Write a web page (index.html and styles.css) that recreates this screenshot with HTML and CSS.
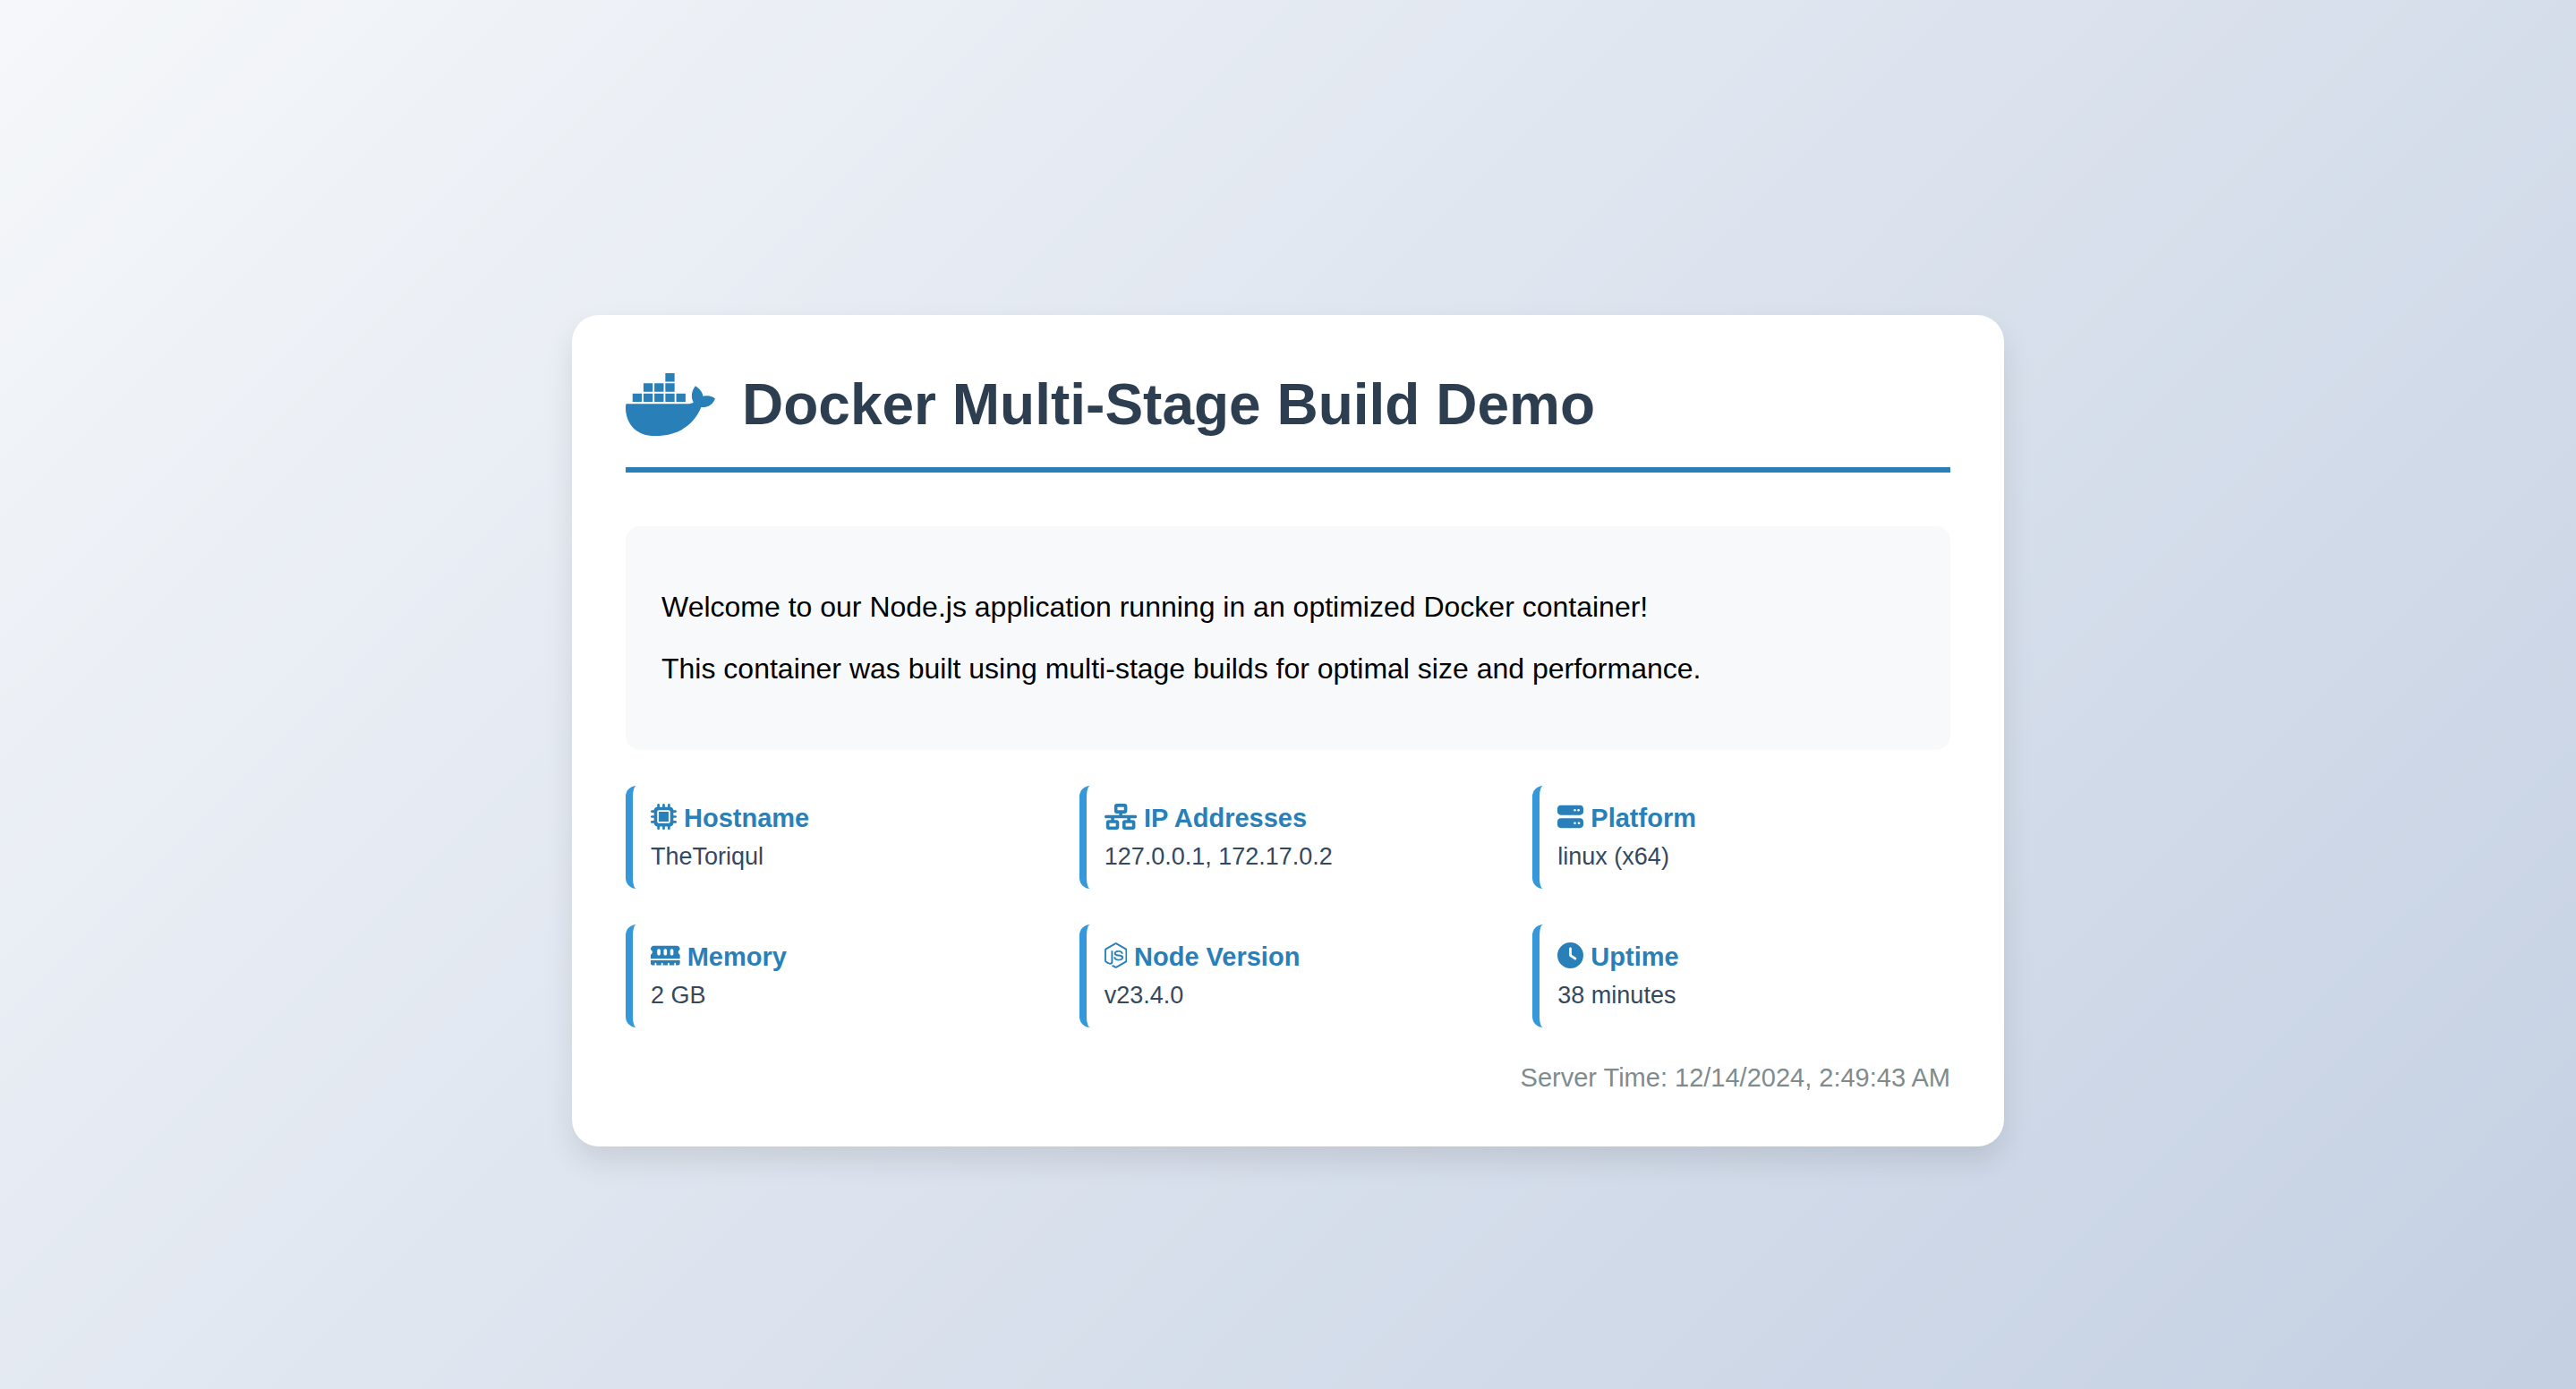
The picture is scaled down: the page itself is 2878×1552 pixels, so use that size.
FILE: index.html
```html
<!DOCTYPE html>
<html lang="en">
<head>
<meta charset="utf-8">
<meta name="viewport" content="width=device-width, initial-scale=1">
<title>Docker Multi-Stage Build Demo</title>
<link rel="stylesheet" href="styles.css">
</head>
<body>
<main class="container">
  <header class="header">
    <svg class="docker-icon" viewBox="0 0 640 512" aria-hidden="true"><path d="M349.9 236.3h-66.1v-59.4h66.1v59.4zm0-204.3h-66.1v60.7h66.1V32zm78.2 144.8H362v59.4h66.1v-59.4zm-156.3-72.1h-66.1v60.1h66.1v-60.1zm78.1 0h-66.1v60.1h66.1v-60.1zm276.8 100c-14.4-9.7-47.6-13.2-73.1-8.4-3.3-24-16.7-44.9-41.1-63.7l-14-9.3-9.3 14c-18.4 27.8-23.4 73.6-3.7 103.8-8.7 4.7-25.8 11.1-48.4 10.7H2.4c-8.7 50.8 5.8 116.8 44 162.1 37.1 43.9 92.7 66.2 165.4 66.2 157.4 0 273.9-72.5 328.4-204.2 21.4.4 67.6.1 91.3-45.2 1.5-2.5 6.6-13.2 8.5-17.1l-13.3-8.9zm-511.1-27.9h-66v59.4h66.1v-59.4zm78.1 0h-66.1v59.4h66.1v-59.4zm78.1 0h-66.1v59.4h66.1v-59.4zm-78.1-72.1h-66.1v60.1h66.1v-60.1z"/></svg>
    <h1 class="title">Docker Multi-Stage Build Demo</h1>
  </header>

  <section class="welcome">
    <p>Welcome to our Node.js application running in an optimized Docker container!</p>
    <p>This container was built using multi-stage builds for optimal size and performance.</p>
  </section>

  <section class="info-grid">
    <article class="info-item">
      <h2 class="info-label"><svg class="icon" viewBox="0 0 512 512" aria-hidden="true"><path d="M176 24c0-13.3-10.7-24-24-24s-24 10.7-24 24V64c-35.3 0-64 28.7-64 64H24c-13.3 0-24 10.7-24 24s10.7 24 24 24H64v56H24c-13.3 0-24 10.7-24 24s10.7 24 24 24H64v56H24c-13.3 0-24 10.7-24 24s10.7 24 24 24H64c0 35.3 28.7 64 64 64v40c0 13.3 10.7 24 24 24s24-10.7 24-24V448h56v40c0 13.3 10.7 24 24 24s24-10.7 24-24V448h56v40c0 13.3 10.7 24 24 24s24-10.7 24-24V448c35.3 0 64-28.7 64-64h40c13.3 0 24-10.7 24-24s-10.7-24-24-24H448V280h40c13.3 0 24-10.7 24-24s-10.7-24-24-24H448V176h40c13.3 0 24-10.7 24-24s-10.7-24-24-24H448c0-35.3-28.7-64-64-64V24c0-13.3-10.7-24-24-24s-24 10.7-24 24V64H280V24c0-13.3-10.7-24-24-24s-24 10.7-24 24V64H176V24zM160 128H352c17.7 0 32 14.3 32 32V352c0 17.7-14.3 32-32 32H160c-17.7 0-32-14.3-32-32V160c0-17.7 14.3-32 32-32zm192 32H160V352H352V160z"/></svg>Hostname</h2>
      <p class="info-value">TheToriqul</p>
    </article>
    <article class="info-item">
      <h2 class="info-label"><svg class="icon" viewBox="0 0 640 512" aria-hidden="true"><path d="M256 64H384v64H256V64zM240 0c-26.5 0-48 21.5-48 48v96c0 26.5 21.5 48 48 48h48v32H32c-17.7 0-32 14.3-32 32s14.3 32 32 32h96v32H80c-26.5 0-48 21.5-48 48v96c0 26.5 21.5 48 48 48H240c26.5 0 48-21.5 48-48V368c0-26.5-21.5-48-48-48H192V288H448v32H400c-26.5 0-48 21.5-48 48v96c0 26.5 21.5 48 48 48H560c26.5 0 48-21.5 48-48V368c0-26.5-21.5-48-48-48H512V288h96c17.7 0 32-14.3 32-32s-14.3-32-32-32H352V192h48c26.5 0 48-21.5 48-48V48c0-26.5-21.5-48-48-48H240zM96 448V384H224v64H96zm320-64H544v64H416V384z"/></svg>IP Addresses</h2>
      <p class="info-value">127.0.0.1, 172.17.0.2</p>
    </article>
    <article class="info-item">
      <h2 class="info-label"><svg class="icon" viewBox="0 0 512 512" aria-hidden="true"><path d="M64 32C28.7 32 0 60.7 0 96v64c0 35.3 28.7 64 64 64H448c35.3 0 64-28.7 64-64V96c0-35.3-28.7-64-64-64H64zm280 72a24 24 0 1 1 0 48 24 24 0 1 1 0-48zm48 24a24 24 0 1 1 48 0 24 24 0 1 1 -48 0zM64 288c-35.3 0-64 28.7-64 64v64c0 35.3 28.7 64 64 64H448c35.3 0 64-28.7 64-64V352c0-35.3-28.7-64-64-64H64zm280 72a24 24 0 1 1 0 48 24 24 0 1 1 0-48zm56 24a24 24 0 1 1 48 0 24 24 0 1 1 -48 0z"/></svg>Platform</h2>
      <p class="info-value">linux (x64)</p>
    </article>
    <article class="info-item">
      <h2 class="info-label"><svg class="icon" viewBox="0 0 576 512" aria-hidden="true"><path d="M64 64C28.7 64 0 92.7 0 128v7.4c0 6.8 4.4 12.6 10.1 16.3C23.3 160.3 32 175.1 32 192s-8.7 31.7-21.9 40.3C4.4 236 0 241.8 0 248.6V320H576V248.6c0-6.8-4.4-12.6-10.1-16.3C552.7 223.7 544 208.9 544 192s8.7-31.7 21.9-40.3c5.7-3.7 10.1-9.5 10.1-16.3V128c0-35.3-28.7-64-64-64H64zM576 352H0v64c0 17.7 14.3 32 32 32H80V416c0-8.8 7.2-16 16-16s16 7.2 16 16v32h96V416c0-8.8 7.2-16 16-16s16 7.2 16 16v32h96V416c0-8.8 7.2-16 16-16s16 7.2 16 16v32h96V416c0-8.8 7.2-16 16-16s16 7.2 16 16v32h48c17.7 0 32-14.3 32-32V352zM192 160v64c0 17.7-14.3 32-32 32s-32-14.3-32-32V160c0-17.7 14.3-32 32-32s32 14.3 32 32zm128 0v64c0 17.7-14.3 32-32 32s-32-14.3-32-32V160c0-17.7 14.3-32 32-32s32 14.3 32 32zm128 0v64c0 17.7-14.3 32-32 32s-32-14.3-32-32V160c0-17.7 14.3-32 32-32s32 14.3 32 32z"/></svg>Memory</h2>
      <p class="info-value">2 GB</p>
    </article>
    <article class="info-item">
      <h2 class="info-label"><svg class="icon" viewBox="0 0 448 512" aria-hidden="true"><path d="M224 508c-6.7 0-13.5-1.8-19.4-5.2l-61.7-36.5c-9.2-5.2-4.7-7-1.7-8 12.3-4.3 14.8-5.2 27.9-12.7 1.4-.8 3.2-.5 4.6.4l47.4 28.1c1.7 1 4.1 1 5.7 0l184.7-106.6c1.7-1 2.8-3 2.8-5V149.3c0-2.1-1.1-4-2.9-5.1L226.8 37.7c-1.7-1-4-1-5.7 0L36.6 144.3c-1.8 1-2.9 3-2.9 5.1v213.1c0 2 1.1 4 2.9 4.9l50.6 29.2c27.5 13.7 44.3-2.4 44.3-18.7V167.5c0-3 2.4-5.3 5.4-5.3h23.4c2.9 0 5.4 2.3 5.4 5.3V378c0 36.6-20 57.6-54.7 57.6-10.7 0-19.1 0-42.5-11.6l-48.4-27.9C8.1 389.2.7 376.3.7 362.4V149.3c0-13.8 7.4-26.8 19.4-33.7L204.6 9c11.7-6.6 27.2-6.6 38.8 0l184.7 106.7c12 6.9 19.4 19.8 19.4 33.7v213.1c0 13.8-7.4 26.7-19.4 33.7L243.4 502.8c-5.9 3.4-12.6 5.2-19.4 5.2zm149.1-210.1c0-39.9-27-50.5-83.7-58-57.4-7.6-63.2-11.5-63.2-24.9 0-11.1 4.9-25.9 47.4-25.9 37.9 0 51.9 8.2 57.7 33.8.5 2.4 2.7 4.2 5.2 4.2h24c1.5 0 2.9-.6 3.9-1.7s1.5-2.6 1.4-4.1c-3.7-44.1-33-64.6-92.2-64.6-52.7 0-84.1 22.2-84.1 59.5 0 40.4 31.3 51.6 81.8 56.6 60.5 5.9 65.2 14.8 65.2 26.7 0 20.6-16.6 29.4-55.5 29.4-48.9 0-59.6-12.3-63.2-36.6-.4-2.6-2.6-4.5-5.3-4.5h-23.9c-3 0-5.3 2.4-5.3 5.3 0 31.1 16.9 68.2 97.8 68.2 58.4-.1 92-23.2 92-63.4z"/></svg>Node Version</h2>
      <p class="info-value">v23.4.0</p>
    </article>
    <article class="info-item">
      <h2 class="info-label"><svg class="icon" viewBox="0 0 512 512" aria-hidden="true"><path d="M256 0a256 256 0 1 1 0 512A256 256 0 1 1 256 0zM232 120V256c0 8 4 15.5 10.7 20l96 64c11 7.4 25.9 4.4 33.3-6.7s4.4-25.9-6.7-33.3L280 243.2V120c0-13.3-10.7-24-24-24s-24 10.7-24 24z"/></svg>Uptime</h2>
      <p class="info-value">38 minutes</p>
    </article>
  </section>

  <footer class="timestamp">Server Time: 12/14/2024, 2:49:43 AM</footer>
</main>
</body>
</html>
```
FILE: styles.css
```css
* {
  box-sizing: border-box;
}

body {
  display: flex;
  justify-content: center;
  align-items: center;
  min-height: 100vh;
  margin: 0;
  padding: 120px 40px 40px;
  background: linear-gradient(135deg, #f5f7fa 0%, #c3cfe2 100%) 0 0 / 100% calc(100vh + 80px);
  font-family: "Liberation Sans", Arial, sans-serif;
}

.container {
  width: 100%;
  max-width: 1600px;
  padding: 60px;
  border-radius: 30px;
  background: #fff;
  box-shadow: 0 16px 32px rgba(0, 0, 0, 0.1);
}

.header {
  display: flex;
  align-items: center;
  gap: 30px;
  margin-bottom: 60px;
  padding-bottom: 30px;
  border-bottom: 6px solid #2980b9;
}

.docker-icon {
  height: 80px;
  fill: #2980b9;
}

.title {
  margin: 0;
  color: #2c3e50;
  font-size: 64px;
  line-height: 74px;
}

.welcome {
  margin-bottom: 40px;
  padding: 40px;
  border-radius: 16px;
  background: #f8f9fa;
  color: #000;
  font-size: 32px;
  line-height: 37px;
}

.welcome p {
  margin: 32px 0;
}

.info-grid {
  display: grid;
  grid-template-columns: repeat(3, 1fr);
  gap: 40px;
}

.info-item {
  padding: 20px;
  border-left: 8px solid #3498db;
  border-radius: 12px;
}

.info-label {
  display: flex;
  align-items: flex-start;
  gap: 8px;
  margin: 0 0 10px;
  color: #2980b9;
  font-size: 29px;
  line-height: 33px;
}

.icon {
  height: 29px;
  fill: currentColor;
}

.info-value {
  margin: 0;
  color: #34495e;
  font-size: 27px;
  line-height: 32px;
}

.timestamp {
  margin-top: 40px;
  color: #7f8c8d;
  font-size: 29px;
  line-height: 33px;
  text-align: right;
}
```
